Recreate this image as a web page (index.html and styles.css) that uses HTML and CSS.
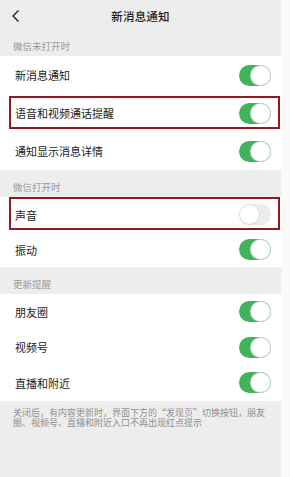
FILE: index.html
```html
<!DOCTYPE html>
<html lang="zh-CN">
<head>
<meta charset="utf-8">
<link rel="stylesheet" href="styles.css">
</head>
<body>
<div class="page">
  <header class="topbar">
    <svg class="back" width="10" height="14" viewBox="0 0 10 14"><path d="M7.5 1.5 L2 7 L7.5 12.5" fill="none" stroke="#222" stroke-width="1.4"/></svg>
    <div class="title">新消息通知</div>
  </header>
  <div class="label first">微信未打开时</div>
  <div class="group tall">
    <div class="row"><span>新消息通知</span><i class="sw on"></i></div>
    <div class="row boxed"><span>语音和视频通话提醒</span><i class="sw on"></i></div>
    <div class="row"><span>通知显示消息详情</span><i class="sw on"></i></div>
  </div>
  <div class="label">微信打开时</div>
  <div class="group">
    <div class="row boxed b2"><span>声音</span><i class="sw"></i></div>
    <div class="row"><span>振动</span><i class="sw on"></i></div>
  </div>
  <div class="label">更新提醒</div>
  <div class="group mid">
    <div class="row"><span>朋友圈</span><i class="sw on"></i></div>
    <div class="row"><span>视频号</span><i class="sw on"></i></div>
    <div class="row"><span>直播和附近</span><i class="sw on"></i></div>
  </div>
  <div class="foot">关闭后，有内容更新时，界面下方的“发现页”切换按钮，朋友圈、视频号、直播和附近入口不再出现红点提示</div>
</div>
</body>
</html>
```
FILE: styles.css
```css
html, body { margin: 0; padding: 0; background: #fafafa; }
body { font-family: "Noto Sans CJK SC", "Noto Sans", sans-serif; color: #1b1b1b; }
.page { width: 281px; height: 477px; background: #ededed; display: flex; flex-direction: column; }
.topbar { height: 32px; display: flex; align-items: center; justify-content: center; position: relative; }
.back { position: absolute; left: 11px; top: 9px; }
.title { font-size: 11.5px; font-weight: 500; letter-spacing: 0.2px; }
.label { height: 27px; box-sizing: border-box; padding: 11px 0 0 13px; font-size: 9.5px; line-height: 12px; color: #9a9a9a; }
.label.first { height: 24px; padding-top: 8px; }
.group { background: #fff; display: flex; flex-direction: column; }
.row { height: 35px; display: flex; align-items: center; justify-content: space-between; padding: 0 10px 0 15px; font-size: 11px; position: relative; }
.tall .row { height: 38px; }
.mid .row { height: 35.5px; }
.boxed::after { content: ""; position: absolute; left: 9px; right: 1px; top: 2px; bottom: 3px; border: 2px solid #8e1b22; }
.b2::after { top: 0; bottom: 2px; }
.sw { display: block; width: 32px; height: 21px; border-radius: 11px; background: #ececec; position: relative; box-sizing: border-box; }
.sw::after { content: ""; position: absolute; top: 1px; left: 1px; width: 19px; height: 19px; border-radius: 50%; background: #fff; box-shadow: 0 0 0 0.5px #d8d8d8, 0 1px 2px rgba(0,0,0,0.12); }
.sw.on { background: #41b35d; }
.sw.on::after { left: 12px; box-shadow: 0 0 0 1px #cfd8cf; }
.foot { flex: 1; padding: 7px 14px 0 13px; font-size: 9px; line-height: 10px; color: #8f8f8f; }
```
